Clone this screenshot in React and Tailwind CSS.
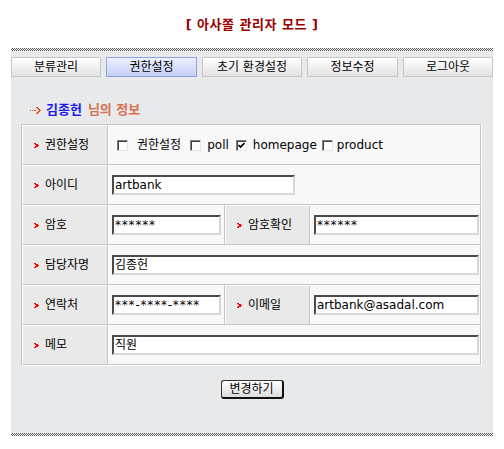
import React from "react";

const FONT = { fontFamily: '"DejaVu Sans","Noto Sans CJK KR",sans-serif' };

function Bullet() {
  return (
    <svg width="5" height="5" viewBox="0 0 5 5" className="shrink-0" shapeRendering="crispEdges">
      <rect x="0" y="0" width="2" height="1" fill="#ff0000" />
      <rect x="1" y="1" width="3" height="1" fill="#ff0000" />
      <rect x="2" y="2" width="3" height="1" fill="#ff0000" />
      <rect x="1" y="3" width="3" height="1" fill="#ff0000" />
      <rect x="0" y="4" width="2" height="1" fill="#ff0000" />
    </svg>
  );
}

function Dotted() {
  return (
    <div className="h-[3px] w-full bg-[conic-gradient(#555_25%,transparent_0_50%,#555_0_75%,transparent_0)] bg-[length:2px_2px]" />
  );
}

function Tab({ label, w, active }) {
  return (
    <div
      className={
        "h-[20px] flex items-center justify-center text-[12px] text-black border " +
        w +
        (active
          ? " border-[#8fa3e3] bg-[linear-gradient(#eef1ff,#c4cff7)]"
          : " border-[#c6c6c6] bg-[linear-gradient(#ffffff,#e2e2e2)]")
      }
    >
      {label}
    </div>
  );
}

function Box({ checked, ml }) {
  return (
    <div
      className={
        "w-[11px] h-[11px] bg-white border border-t-[#808080] border-l-[#808080] border-b-[#e4e4e4] border-r-[#e4e4e4] shadow-[inset_1px_1px_0_#404040] flex items-center justify-center shrink-0 " +
        ml
      }
    >
      {checked && (
        <svg width="7" height="7" viewBox="0 0 7 7">
          <path d="M0.5 3 L2.5 5 L6.5 1" stroke="#000" strokeWidth="1.6" fill="none" />
        </svg>
      )}
    </div>
  );
}

function Field({ value, w, masked }) {
  return (
    <div
      className={
        "h-[20px] bg-white border-2 border-t-[#4a4a4a] border-l-[#4a4a4a] border-b-[#d8d6d0] border-r-[#d8d6d0] flex items-center pl-[1px] text-[12px] text-black whitespace-nowrap overflow-hidden " +
        (masked ? "tracking-[0.8px] " : "") +
        w
      }
    >
      {value}
    </div>
  );
}

const cellBase =
  "h-[40px] flex items-center border-t border-l border-t-white border-l-white border-b border-r border-b-[#c4c4c4] border-r-[#c4c4c4]";

function Label({ children }) {
  return (
    <div className={cellBase + " bg-[#e9e9e9] pl-[11px] gap-[6px] text-[12px] text-black"}>
      <Bullet />
      <span>{children}</span>
    </div>
  );
}

function Cell({ children, span }) {
  return (
    <div className={cellBase + " bg-[#f8f8f8] pl-[3px] " + (span ? "col-span-3" : "")}>
      {children}
    </div>
  );
}

export default function App() {
  return (
    <div className="w-[504px] h-[449px] bg-white" style={FONT}>
      <div className="pt-[18px] h-[48px] text-center text-[13px] leading-[14px] font-bold text-[#990000] tracking-[0.5px]">
        [ 아사쫄 관리자 모드 ]
      </div>
      <div className="ml-[11px] w-[482px]">
        <Dotted />
        <div className="bg-[#e8e9eb] pt-[6px] pb-[36px] h-[382px]">
          <div className="flex justify-between">
            <Tab label="분류관리" w="w-[90px]" />
            <Tab label="권한설정" w="w-[91px]" active />
            <Tab label="초기 환경설정" w="w-[100px]" />
            <Tab label="정보수정" w="w-[91px]" />
            <Tab label="로그아웃" w="w-[90px]" />
          </div>
          <div className="mt-[26px] ml-[19px] h-[14px] flex items-center text-[13px] font-bold leading-[14px]">
            <svg width="12" height="9" viewBox="0 0 12 9" className="mr-[4px]" shapeRendering="crispEdges">
              <rect x="0" y="4" width="1" height="1" fill="#f04a10" />
              <rect x="2" y="4" width="1" height="1" fill="#f04a10" />
              <rect x="4" y="4" width="2" height="1" fill="#f04a10" />
              <rect x="6" y="1" width="2" height="1" fill="#f04a10" />
              <rect x="7" y="2" width="2" height="1" fill="#f04a10" />
              <rect x="8" y="3" width="2" height="1" fill="#f04a10" />
              <rect x="9" y="4" width="2" height="1" fill="#f04a10" />
              <rect x="8" y="5" width="2" height="1" fill="#f04a10" />
              <rect x="7" y="6" width="2" height="1" fill="#f04a10" />
              <rect x="6" y="7" width="2" height="1" fill="#f04a10" />
            </svg>
            <span className="text-[#1a1aee]">김종헌</span>
            <span className="text-[#d8704f] ml-[6px]">님의 정보</span>
          </div>
          <div className="mt-[7px] ml-[10px] w-[461px] border-t border-l border-t-[#c4c4c4] border-l-[#c4c4c4] border-b border-r border-b-white border-r-white grid grid-cols-[86px_117px_85px_171px]">
            <Label>권한설정</Label>
            <Cell span>
              <div className="flex items-center text-[12px] text-black">
                <Box ml="ml-[5px]" />
                <span className="ml-[9px]">권한설정</span>
                <Box ml="ml-[9px]" />
                <span className="ml-[6px]">poll</span>
                <Box ml="ml-[7px]" checked />
                <span className="ml-[6px]">homepage</span>
                <Box ml="ml-[5px]" />
                <span className="ml-[4px]">product</span>
              </div>
            </Cell>

            <Label>아이디</Label>
            <Cell span>
              <Field value="artbank" w="w-[183px]" />
            </Cell>

            <Label>암호</Label>
            <Cell>
              <Field value="******" w="w-[109px]" masked />
            </Cell>
            <Label>암호확인</Label>
            <Cell>
              <Field value="******" w="w-[165px]" masked />
            </Cell>

            <Label>담당자명</Label>
            <Cell span>
              <Field value="김종헌" w="w-[367px]" />
            </Cell>

            <Label>연락처</Label>
            <Cell>
              <Field value="***-****-****" w="w-[109px]" masked />
            </Cell>
            <Label>이메일</Label>
            <Cell>
              <Field value="artbank@asadal.com" w="w-[165px]" />
            </Cell>

            <Label>메모</Label>
            <Cell span>
              <Field value="직원" w="w-[367px]" />
            </Cell>
          </div>
          <div className="mt-[14px] flex justify-center">
            <button className="w-[63px] h-[19px] rounded-[3px] border border-[#333] border-b-2 border-r-2 border-b-[#111] border-r-[#111] bg-[linear-gradient(#ffffff,#dcdcdc)] text-[12px] leading-[15px] text-black flex items-center justify-center">
              변경하기
            </button>
          </div>
        </div>
        <Dotted />
      </div>
    </div>
  );
}
